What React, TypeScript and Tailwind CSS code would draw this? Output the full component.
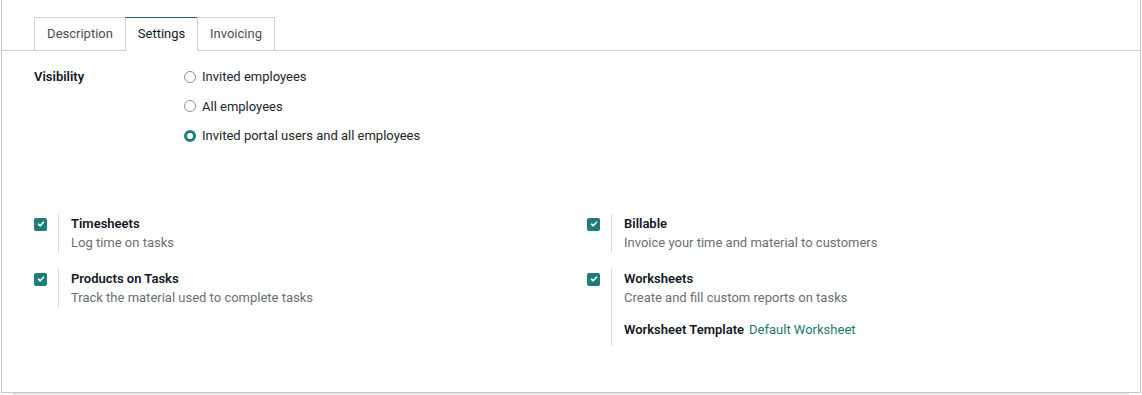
import React from "react";

const TEAL = "text-[#1c786f]";

function Radio({ checked, label }: { checked?: boolean; label: string }) {
  return (
    <label className="flex h-[29.5px] items-center gap-[6px]">
      {checked ? (
        <span className="box-border h-[12px] w-[12px] rounded-full border-[3.5px] border-[#1a7f78] bg-white" />
      ) : (
        <span className="box-border h-[12px] w-[12px] rounded-full border border-[#8a8f98] bg-white" />
      )}
      <span className="text-[13px] text-[#212529]">{label}</span>
    </label>
  );
}

function Check() {
  return (
    <span className="mt-[4px] flex h-[13px] w-[13px] shrink-0 items-center justify-center rounded-[2px] bg-[#1f7d77]">
      <svg width="8" height="8" viewBox="0 0 8 8">
        <path d="M1.5 4.2 L3.2 5.8 L6.5 2.2" fill="none" stroke="white" strokeWidth="1.6" strokeLinecap="round" strokeLinejoin="round" />
      </svg>
    </span>
  );
}

function Setting({ title, desc, children }: { title: string; desc: string; children?: React.ReactNode }) {
  return (
    <div className="flex items-start">
      <Check />
      <div className="ml-[11px] border-l border-[#d8dadd] pl-[12px] pb-[1px]">
        <div className="text-[13px] font-semibold leading-[19px] text-[#111827]">{title}</div>
        <div className="text-[13px] leading-[19px] text-[#6b6f76]">{desc}</div>
        {children}
      </div>
    </div>
  );
}

export default function App() {
  return (
    <div className="h-[395px] w-[1142px] overflow-hidden bg-white font-['Roboto',sans-serif]">
      <div className="ml-[1px] box-border h-[393px] w-[1140px] border-x border-b border-[#c4c6cc] bg-white">
        {/* tabs */}
        <div className="flex border-b border-[#cdd0d5] px-[32px] pt-[17px]">
          <div className="-mb-px box-border flex h-[34px] w-[92px] items-center justify-center border border-b-0 border-[#cdd0d5] pb-[2px] text-[13px] text-[#4a4f57]">
            Description
          </div>
          <div className="-mb-px -ml-px box-border flex h-[34px] w-[73px] items-center justify-center border border-b-0 border-[#cdd0d5] border-t-[#1d5b79] bg-white pb-[2px] text-[13px] text-[#111827]">
            Settings
          </div>
          <div className="-mb-px -ml-px box-border flex h-[33px] w-[78px] items-center justify-center border border-b-0 border-[#cdd0d5] pb-[1px] text-[13px] text-[#4a4f57]">
            Invoicing
          </div>
        </div>

        {/* visibility */}
        <div className="flex px-[32px] pt-[11px]">
          <div className="w-[150px] pt-[5px] text-[13px] font-semibold leading-[20px] text-[#111827]">Visibility</div>
          <div className="flex flex-col">
            <Radio label="Invited employees" />
            <Radio label="All employees" />
            <Radio checked label="Invited portal users and all employees" />
          </div>
        </div>

        {/* settings */}
        <div className="grid grid-cols-2 px-[32px] pt-[63px]">
          <div className="flex flex-col gap-[16px]">
            <Setting title="Timesheets" desc="Log time on tasks" />
            <Setting title="Products on Tasks" desc="Track the material used to complete tasks" />
          </div>
          <div className="flex flex-col gap-[16px] pl-[16px]">
            <Setting title="Billable" desc="Invoice your time and material to customers" />
            <Setting title="Worksheets" desc="Create and fill custom reports on tasks">
              <div className="mt-[13px] flex gap-[5px] pb-[6px] text-[13px] leading-[19px]">
                <span className="font-semibold text-[#111827]">Worksheet Template</span>
                <span className={TEAL}>Default Worksheet</span>
              </div>
            </Setting>
          </div>
        </div>
      </div>
      <div className="mx-[13px] h-[2px] bg-[#e6e7ea]" />
    </div>
  );
}
